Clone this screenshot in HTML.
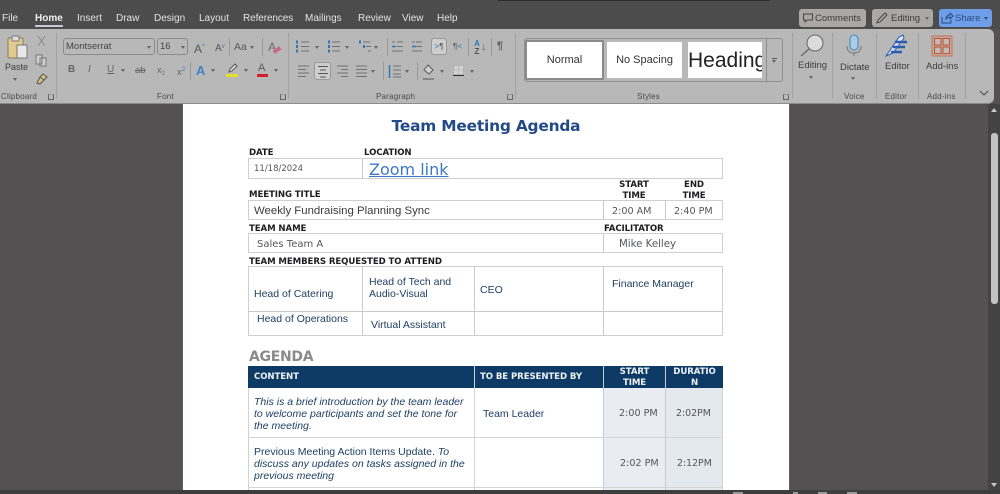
<!DOCTYPE html>
<html><head><meta charset="utf-8"><title>Team Meeting Agenda</title>
<style>
html,body{margin:0;padding:0;width:1000px;height:494px;overflow:hidden;background:#535152;font-family:"Liberation Sans",sans-serif}
.a{position:absolute;white-space:nowrap}
.t{position:absolute;white-space:nowrap;color:#e3e3e3;font-size:10px;line-height:12px;top:13px}
.r{position:absolute;white-space:nowrap;color:#3c3c3c;font-size:9.500px;line-height:11px}
.g{position:absolute;white-space:nowrap;color:#4a4a4a;font-size:8px;line-height:10px;top:92px;letter-spacing:.2px}
.s{position:absolute;top:33px;width:1px;height:66px;background:#a3a2a1}
.i{position:absolute;white-space:nowrap;color:#666;font-size:10px;line-height:12px;font-weight:bold}
.c{position:absolute;width:0;height:0;border-left:2.500px solid transparent;border-right:2.500px solid transparent;border-top:3px solid #666}
.b{position:absolute;white-space:nowrap;font-family:"DejaVu Sans",sans-serif;font-weight:bold;font-size:8.600px;line-height:10px;color:#1d1d1f;letter-spacing:-.1px}
.m{position:absolute;white-space:nowrap;font-family:"DejaVu Sans",sans-serif;font-size:9.600px;line-height:11px;color:#55565a}
.l{position:absolute;white-space:nowrap;font-size:10.500px;line-height:12px;color:#1f3f62}
.h{position:absolute;background:#c9c9c9}
.w{position:absolute;white-space:nowrap;font-family:"DejaVu Sans",sans-serif;font-weight:bold;font-size:8.600px;line-height:11px;color:#eef2f6;text-align:center;letter-spacing:-.1px}
</style></head><body>

<!-- title bar -->
<div class="a" style="left:0;top:0;width:1000px;height:29px;background:#4d4c4d"></div>
<div class="a" style="left:498px;top:0;width:272px;height:1px;background:#2d2d2d"></div>
<div class="t" style="left:2px">File</div>
<div class="t" style="left:35px;font-weight:bold;color:#f0f0f0">Home</div>
<div class="a" style="left:35px;top:25px;width:28px;height:2px;background:#c8c8d8"></div>
<div class="t" style="left:77px">Insert</div>
<div class="t" style="left:116px">Draw</div>
<div class="t" style="left:154px">Design</div>
<div class="t" style="left:199px">Layout</div>
<div class="t" style="left:243px;letter-spacing:-.1px">References</div>
<div class="t" style="left:305px">Mailings</div>
<div class="t" style="left:358px">Review</div>
<div class="t" style="left:402px">View</div>
<div class="t" style="left:437px">Help</div>

<!-- top right buttons -->
<div class="a" style="left:799px;top:9px;width:67px;height:18px;background:#a9a8a7;border-radius:3px"></div>
<svg class="a" style="left:803px;top:13px" width="10" height="10" viewBox="0 0 10 10"><path d="M.5 1h9v6H4L2 9V7H.5z" fill="none" stroke="#444" stroke-width="1"/></svg>
<div class="a" style="left:815px;top:13px;font-size:9.500px;line-height:12px;color:#3b3b3b">Comments</div>
<div class="a" style="left:872px;top:9px;width:61px;height:18px;background:#a9a8a7;border-radius:3px"></div>
<svg class="a" style="left:875px;top:11px" width="14" height="14" viewBox="0 0 14 14"><path d="M2 12l1-3 7-7 2 2-7 7z" fill="none" stroke="#444" stroke-width="1"/></svg>
<div class="a" style="left:891px;top:13px;font-size:9.500px;line-height:12px;color:#3b3b3b">Editing</div>
<div class="c" style="left:925px;top:17px"></div>
<div class="a" style="left:939px;top:9px;width:53px;height:18px;background:#6f9ee8;border-radius:3px"></div>
<svg class="a" style="left:941px;top:12px" width="13" height="12" viewBox="0 0 13 12"><path d="M1 5v6h9V8M5 7c0-3 2-4 4-4V1l3 3-3 3V5c-2 0-3 1-4 2z" fill="none" stroke="#2c4a80" stroke-width="1"/></svg>
<div class="a" style="left:955px;top:13px;font-size:9.500px;line-height:12px;color:#2c4a80">Share</div>
<div class="c" style="left:984px;top:17px;border-top-color:#2c4a80"></div>

<!-- ribbon -->
<div class="a" style="left:0;top:29px;width:994px;height:74px;background:#b9b8b8;border-radius:0 6px 6px 0;border-bottom:1px solid #8a8989"></div>
<div class="s" style="left:56px"></div>
<div class="s" style="left:288px"></div>
<div class="s" style="left:515px"></div>
<div class="s" style="left:792px"></div>
<div class="s" style="left:832px"></div>
<div class="s" style="left:876px"></div>
<div class="s" style="left:918px"></div>
<div class="s" style="left:965px"></div>

<!-- clipboard -->
<svg class="a" style="left:6px;top:35px" width="24" height="26" viewBox="0 0 24 26"><rect x="2" y="3" width="15" height="20" rx="1" fill="#e2c98f" stroke="#8a7a55"/><rect x="6" y="1" width="7" height="5" rx="1" fill="#ddd" stroke="#777"/><rect x="11" y="10" width="10" height="13" fill="#e8e8e8" stroke="#777"/></svg>
<div class="r" style="left:5px;top:62px;font-size:9px">Paste</div>
<div class="c" style="left:13px;top:78px"></div>
<svg class="a" style="left:37px;top:35px" width="9" height="12" viewBox="0 0 9 12"><path d="M1 1l7 10M8 1L1 11" stroke="#8c8c8c" fill="none"/></svg>
<svg class="a" style="left:35px;top:54px" width="13" height="13" viewBox="0 0 13 13"><path d="M1 1h6v9H1zM5 4h6v8H5z" fill="#cfcfcf" stroke="#777"/></svg>
<svg class="a" style="left:36px;top:73px" width="12" height="12" viewBox="0 0 12 12"><path d="M7 1l4 3-3 3-4-3zM4 4L1 10l3 1 4-4" fill="#d8c080" stroke="#555"/></svg>
<div class="g" style="left:1px">Clipboard</div>
<div class="a" style="left:48px;top:94px;width:6px;height:6px;border:1px solid #666;box-sizing:border-box;border-top-color:#999"></div>

<!-- font -->
<div class="a" style="left:63px;top:38px;width:92px;height:17px;box-sizing:border-box;border:1px solid #8d8c8c;border-radius:3px;font-size:9.500px;line-height:15px;padding-left:2px;color:#454545">Montserrat</div>
<div class="c" style="left:147px;top:46px"></div>
<div class="a" style="left:157px;top:38px;width:31px;height:17px;box-sizing:border-box;border:1px solid #8d8c8c;border-radius:3px;font-size:9.500px;line-height:15px;padding-left:2px;color:#454545">16</div>
<div class="c" style="left:181px;top:46px"></div>
<div class="a" style="left:194px;top:40px;font-size:12px;line-height:14px;color:#5a5a5a">A<span style="font-size:6px;vertical-align:5px;color:#3c78b0">^</span></div>
<div class="a" style="left:215px;top:41px;font-size:10px;line-height:12px;color:#5a5a5a">A<span style="font-size:6px;vertical-align:3px;color:#3c78b0">v</span></div>
<div class="a" style="left:229px;top:38px;width:1px;height:18px;background:#9a9999"></div>
<div class="a" style="left:234px;top:41px;font-size:10.500px;line-height:12px;color:#5a5a5a">Aa</div>
<div class="c" style="left:250px;top:46px"></div>
<div class="a" style="left:262px;top:38px;width:1px;height:18px;background:#9a9999"></div>
<div class="a" style="left:268px;top:40px;font-size:12px;line-height:14px;color:#6a6a6a">A</div>
<div class="a" style="left:273px;top:48px;width:8px;height:4px;background:#c86a8a;transform:rotate(-35deg)"></div>
<div class="i" style="left:68px;top:64px">B</div>
<div class="i" style="left:88px;top:64px;font-style:italic;font-weight:normal">I</div>
<div class="i" style="left:107px;top:64px;font-weight:normal;text-decoration:underline">U</div>
<div class="c" style="left:121px;top:69px"></div>
<div class="i" style="left:135px;top:65px;font-weight:normal;font-size:9.500px;text-decoration:line-through">ab</div>
<div class="i" style="left:157px;top:65px;font-weight:normal;font-size:9.500px">x<span style="font-size:6px;vertical-align:-2px;color:#3c78b0">2</span></div>
<div class="i" style="left:177px;top:64px;font-weight:normal;font-size:9.500px">x<span style="font-size:6px;vertical-align:4px;color:#3c78b0">2</span></div>
<div class="a" style="left:190px;top:62px;width:1px;height:18px;background:#9a9999"></div>
<div class="a" style="left:196px;top:63px;font-size:13px;line-height:15px;font-weight:bold;color:#3d86c6">A</div>
<div class="c" style="left:211px;top:69px"></div>
<svg class="a" style="left:226px;top:63px" width="13" height="10" viewBox="0 0 13 10"><path d="M3 9l1-3 5-5 2 2-5 5z" fill="#ddd" stroke="#555"/></svg>
<div class="a" style="left:226px;top:74px;width:12px;height:3px;background:#e8e02c"></div>
<div class="c" style="left:244px;top:69px"></div>
<div class="a" style="left:258px;top:62px;font-size:11px;line-height:12px;color:#5a5a5a">A</div>
<div class="a" style="left:257px;top:74px;width:11px;height:3px;background:#d5202a"></div>
<div class="c" style="left:274px;top:69px"></div>
<div class="g" style="left:157px">Font</div>
<div class="a" style="left:280px;top:94px;width:6px;height:6px;border:1px solid #666;box-sizing:border-box;border-top-color:#999"></div>

<!-- paragraph -->
<div class="a" style="left:431px;top:38px;width:16px;height:17px;background:#cfcece;border:1px solid #9a9a9a;border-radius:3px;box-sizing:border-box;font-size:8px;line-height:15px;text-align:center;color:#555"><span style="color:#2f78b8">&gt;</span>¶</div>
<div class="a" style="left:314px;top:62px;width:17px;height:18px;background:#cfcece;border:1px solid #9a9a9a;border-radius:3px;box-sizing:border-box"></div>
<svg class="a" style="left:0;top:0" width="1000" height="110" viewBox="0 0 1000 110" fill="none" stroke="#727272">
<path d="M301 42h8M301 46.500h8M301 51h8M332 42h8M332 46.500h8M332 51h8M363 42h7M366 46.500h5M368 51h3"/>
<path d="M297 40.500v3M297 45v3M297 49.500v3M329 40.500v3M329 45v3M329 49.500v3M360 40.500v3M364 45v3" stroke="#2f78b8" stroke-width="2"/>
<path d="M397 42h6M397 46.500h6M392 51h11M392 42h3M416 42h6M416 46.500h6M412 51h10M412 42h3"/>
<path d="M392 46.500h4M412 46.500h4" stroke="#2f78b8" stroke-width="1.500"/>
<path d="M298 66h11M298 69.500h8M298 73h11M298 76.500h8"/>
<path d="M318 66.500h10M320 70h6M318 73.500h10M320 77h6" stroke="#555"/>
<path d="M337 66h11M341 69.500h7M337 73h11M341 76.500h7"/>
<path d="M356 66h11M356 69.500h11M356 73h11M356 76.500h11"/>
<path d="M393 66h8M393 70h8M393 74h8M393 77h8"/>
<path d="M389.500 65v13" stroke="#2f78b8" stroke-width="1.500"/>
<path d="M423 79h11" stroke="#555"/>
<path d="M453 75.500h11" stroke="#333"/>
<path d="M428 65l5 5-4 4-5-4z" fill="#d0d0d0" stroke="#555"/>
<rect x="453.500" y="65.500" width="10" height="9" fill="#d2d2d2" stroke="#aaa" stroke-dasharray="2 1"/>
<path d="M458.500 65v10M453 70h11" stroke="#bbb"/>
</svg>
<div class="a" style="left:453px;top:41px;font-size:8px;line-height:11px;color:#555">¶<span style="color:#2f78b8">&lt;</span></div>
<div class="a" style="left:468px;top:38px;width:1px;height:18px;background:#9a9999"></div>
<div class="a" style="left:472px;top:40px;width:10px;font-size:8px;line-height:8px;text-align:center;font-weight:bold;color:#2f78b8">A<br><span style="color:#555">Z</span></div>
<div class="a" style="left:481px;top:41px;font-size:11px;line-height:13px;color:#666">↓</div>
<div class="a" style="left:491px;top:38px;width:1px;height:18px;background:#9a9999"></div>
<div class="a" style="left:497px;top:40px;font-size:11px;line-height:13px;font-weight:bold;color:#5e5e5e">¶</div>
<div class="c" style="left:315px;top:46px"></div>
<div class="c" style="left:345px;top:46px"></div>
<div class="c" style="left:374px;top:46px"></div>
<div class="a" style="left:387px;top:38px;width:1px;height:18px;background:#9a9999"></div>
<div class="c" style="left:371px;top:70px"></div>
<div class="a" style="left:383px;top:62px;width:1px;height:18px;background:#9a9999"></div>
<div class="c" style="left:405px;top:70px"></div>
<div class="a" style="left:417px;top:62px;width:1px;height:18px;background:#9a9999"></div>
<div class="c" style="left:440px;top:70px"></div>
<div class="c" style="left:470px;top:70px"></div>
<div class="g" style="left:376px">Paragraph</div>
<div class="a" style="left:507px;top:94px;width:6px;height:6px;border:1px solid #666;box-sizing:border-box;border-top-color:#999"></div>

<!-- styles -->
<div class="a" style="left:524px;top:38px;width:259px;height:44px;box-sizing:border-box;border:1px solid #8f8e8e;border-radius:3px"></div>
<div class="a" style="left:525px;top:40px;width:79px;height:40px;background:#fff;border:2px solid #8c8b8b;box-sizing:border-box;font-size:11px;line-height:36px;text-align:center;color:#333">Normal</div>
<div class="a" style="left:607px;top:42px;width:75px;height:36px;background:#fff;font-size:11px;line-height:36px;text-align:center;color:#333">No Spacing</div>
<div class="a" style="left:688px;top:42px;width:74px;height:36px;background:#fff;font-size:21px;line-height:37px;color:#222;overflow:hidden">Heading</div>
<div class="a" style="left:766px;top:38px;width:1px;height:44px;background:#8f8e8e"></div>
<div class="a" style="left:772px;top:58px;width:5px;height:1px;background:#555"></div>
<div class="c" style="left:772px;top:60px"></div>
<div class="g" style="left:637px">Styles</div>
<div class="a" style="left:783px;top:94px;width:6px;height:6px;border:1px solid #666;box-sizing:border-box;border-top-color:#999"></div>

<!-- editing etc -->
<svg class="a" style="left:798px;top:33px" width="28" height="26" viewBox="0 0 28 26"><circle cx="17" cy="10" r="8" fill="#dcdcdc" stroke="#666"/><path d="M11 16L3 23" stroke="#666" stroke-width="1.300"/></svg>
<div class="r" style="left:798px;top:60px">Editing</div>
<div class="c" style="left:809px;top:76px"></div>
<svg class="a" style="left:845px;top:34px" width="18" height="24" viewBox="0 0 18 24"><rect x="5" y="1" width="8" height="15" rx="4" fill="#a8cbe8" stroke="#4a80b4"/><path d="M2 12c0 5 3 7 7 7s7-2 7-7M9 19v3" fill="none" stroke="#777"/></svg>
<div class="r" style="left:840px;top:62px">Dictate</div>
<div class="c" style="left:851px;top:77px"></div>
<div class="g" style="left:844px">Voice</div>
<svg class="a" style="left:885px;top:34px" width="26" height="24" viewBox="0 0 26 24"><path d="M1 22L14 3l4-2 1 3L8 19z" fill="#dfe6f2" stroke="#2a5db0"/><path d="M10 8h12M8 13h12M6 18h11" stroke="#2a5db0" stroke-width="2.500"/></svg>
<div class="r" style="left:885px;top:61px">Editor</div>
<div class="g" style="left:885px">Editor</div>
<svg class="a" style="left:931px;top:35px" width="22" height="22" viewBox="0 0 22 22"><rect x="1" y="1" width="20" height="20" fill="#c9a596" stroke="#c0765e"/><rect x="3.500" y="3.500" width="6.500" height="6.500" fill="#c3bab6" stroke="#b8573c"/><rect x="12" y="3.500" width="6.500" height="6.500" fill="#c3bab6" stroke="#b8573c"/><rect x="3.500" y="12" width="6.500" height="6.500" fill="#c3bab6" stroke="#b8573c"/><rect x="12" y="12" width="6.500" height="6.500" fill="#c3bab6" stroke="#b8573c"/></svg>
<div class="r" style="left:926px;top:61px">Add-ins</div>
<div class="g" style="left:927px">Add-ins</div>
<svg class="a" style="left:979px;top:90px" width="10" height="7" viewBox="0 0 10 7"><path d="M1 1l4 4 4-4" fill="none" stroke="#555" stroke-width="1.200"/></svg>

<!-- scrollbar -->
<div class="a" style="left:988px;top:104px;width:12px;height:386px;background:#444344"></div>
<div class="a" style="left:991px;top:133px;width:7px;height:171px;background:#c2c2c2;border-radius:3px"></div>
<div class="a" style="left:991px;top:108px;width:0;height:0;border-left:3.500px solid transparent;border-right:3.500px solid transparent;border-bottom:4px solid #c8c8c8"></div>
<div class="a" style="left:991px;top:483px;width:0;height:0;border-left:3.500px solid transparent;border-right:3.500px solid transparent;border-top:4px solid #c8c8c8"></div>

<!-- page -->
<div class="a" style="left:183px;top:104px;width:606px;height:386px;background:#fff;box-shadow:0 0 1px #999"></div>
<div class="a" style="left:183px;top:117px;width:606px;text-align:center;font-family:'DejaVu Sans',sans-serif;font-weight:bold;font-size:15.400px;line-height:18px;color:#234a87;letter-spacing:-.2px">Team Meeting Agenda</div>

<div class="b" style="left:249px;top:148px">DATE</div>
<div class="b" style="left:364px;top:148px">LOCATION</div>
<div class="a" style="left:248px;top:158px;width:475px;height:21px;box-sizing:border-box;border:1px solid #cfcfcf"></div>
<div class="h" style="left:362px;top:158px;width:1px;height:21px"></div>
<div class="m" style="left:254px;top:164px;font-size:8.500px">11/18/2024</div>
<div class="a" style="left:369px;top:160px;font-family:'DejaVu Sans',sans-serif;font-size:16px;line-height:19px;color:#3f78c4;text-decoration:underline">Zoom link</div>

<div class="b" style="left:249px;top:190px">MEETING TITLE</div>
<div class="b" style="left:603px;top:180px;width:62px;text-align:center;line-height:10.500px">START<br>TIME</div>
<div class="b" style="left:665px;top:180px;width:58px;text-align:center;line-height:10.500px">END<br>TIME</div>
<div class="a" style="left:248px;top:200px;width:475px;height:20px;box-sizing:border-box;border:1px solid #cfcfcf"></div>
<div class="h" style="left:603px;top:200px;width:1px;height:20px"></div>
<div class="h" style="left:665px;top:200px;width:1px;height:20px"></div>
<div class="a" style="left:254px;top:205px;font-size:11.400px;line-height:13px;color:#3a3a3a">Weekly Fundraising Planning Sync</div>
<div class="m" style="left:612px;top:206px">2:00 AM</div>
<div class="m" style="left:674px;top:206px">2:40 PM</div>

<div class="b" style="left:249px;top:224px">TEAM NAME</div>
<div class="b" style="left:604px;top:224px">FACILITATOR</div>
<div class="a" style="left:248px;top:233px;width:475px;height:20px;box-sizing:border-box;border:1px solid #cfcfcf"></div>
<div class="h" style="left:603px;top:233px;width:1px;height:20px"></div>
<div class="m" style="left:257px;top:239px;font-size:10px">Sales Team A</div>
<div class="m" style="left:619px;top:239px;font-size:10.200px">Mike Kelley</div>

<div class="b" style="left:249px;top:257px">TEAM MEMBERS REQUESTED TO ATTEND</div>
<div class="a" style="left:248px;top:266px;width:475px;height:70px;box-sizing:border-box;border:1px solid #cfcfcf"></div>
<div class="h" style="left:248px;top:311px;width:475px;height:1px"></div>
<div class="h" style="left:362px;top:266px;width:1px;height:70px"></div>
<div class="h" style="left:474px;top:266px;width:1px;height:70px"></div>
<div class="h" style="left:603px;top:266px;width:1px;height:70px"></div>
<div class="l" style="left:254px;top:288px">Head of Catering</div>
<div class="l" style="left:369px;top:276px">Head of Tech and</div>
<div class="l" style="left:369px;top:288px">Audio-Visual</div>
<div class="l" style="left:480px;top:284px">CEO</div>
<div class="l" style="left:612px;top:278px">Finance Manager</div>
<div class="l" style="left:257px;top:313px">Head of Operations</div>
<div class="l" style="left:371px;top:319px">Virtual Assistant</div>

<div class="a" style="left:249px;top:349px;font-family:'DejaVu Sans',sans-serif;font-weight:bold;font-size:14px;line-height:17px;color:#8a8a8a;letter-spacing:-.3px">AGENDA</div>

<!-- agenda -->
<div class="a" style="left:248px;top:366px;width:475px;height:22px;background:#0e3a66"></div>
<div class="a" style="left:603px;top:388px;width:62px;height:102px;background:#e9ecf2"></div>
<div class="a" style="left:665px;top:388px;width:58px;height:102px;background:#e3e9ec"></div>
<div class="h" style="left:248px;top:388px;width:1px;height:102px;background:#d2d2d2"></div>
<div class="h" style="left:722px;top:388px;width:1px;height:102px;background:#d2d2d2"></div>
<div class="h" style="left:474px;top:366px;width:1px;height:124px;background:#cfd3d8"></div>
<div class="h" style="left:603px;top:366px;width:1px;height:124px;background:#c5cbd2"></div>
<div class="h" style="left:665px;top:366px;width:1px;height:124px;background:#c5cbd2"></div>
<div class="h" style="left:248px;top:437px;width:475px;height:1px;background:#d4d4d4"></div>
<div class="h" style="left:248px;top:487px;width:475px;height:1px;background:#d4d4d4"></div>
<div class="w" style="left:254px;top:372px">CONTENT</div>
<div class="w" style="left:480px;top:372px">TO BE PRESENTED BY</div>
<div class="w" style="left:604px;top:367px;width:61px;line-height:10.500px">START<br>TIME</div>
<div class="w" style="left:666px;top:367px;width:57px;line-height:10.500px">DURATIO<br>N</div>
<div class="l" style="left:254px;top:396px;font-style:italic">This is a brief introduction by the team leader</div>
<div class="l" style="left:254px;top:408px;font-style:italic">to welcome participants and set the tone for</div>
<div class="l" style="left:254px;top:420px;font-style:italic">the meeting.</div>
<div class="l" style="left:483px;top:408px">Team Leader</div>
<div class="m" style="left:619px;top:408px">2:00 PM</div>
<div class="m" style="left:676px;top:408px;font-size:9.400px">2:02PM</div>
<div class="l" style="left:254px;top:446px">Previous Meeting Action Items Update. <i>To</i></div>
<div class="l" style="left:254px;top:458px;font-style:italic">discuss any updates on tasks assigned in the</div>
<div class="l" style="left:254px;top:470px;font-style:italic">previous meeting</div>
<div class="m" style="left:620px;top:458px">2:02 PM</div>
<div class="m" style="left:677px;top:458px;font-size:9.400px">2:12PM</div>

<!-- status strip -->
<div class="a" style="left:0;top:490px;width:1000px;height:4px;background:#3f3e3f"></div>
<div class="a" style="left:733px;top:492px;width:10px;height:2px;background:#9a9a9a"></div>
<div class="a" style="left:793px;top:492px;width:5px;height:2px;background:#9a9a9a"></div>
<div class="a" style="left:818px;top:492px;width:9px;height:2px;background:#9a9a9a"></div>
<div class="a" style="left:847px;top:492px;width:10px;height:2px;background:#9a9a9a"></div>
</body></html>
